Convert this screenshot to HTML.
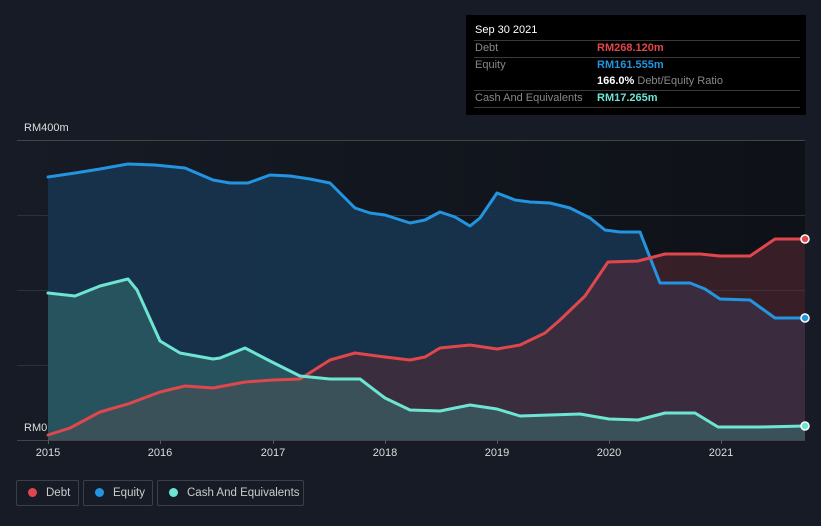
<!DOCTYPE html>
<html><head><style>
body{margin:0;width:821px;height:526px;background:#161b26;font-family:"Liberation Sans",sans-serif;overflow:hidden;position:relative}
.tt{position:absolute;left:466px;top:15px;width:340px;height:100px;background:#000}
.t{position:absolute;font-size:11px;color:#888;white-space:nowrap}
.ln{position:absolute;left:8px;width:326px;height:1px;background:#3a3a3a}
.lg{position:absolute;top:480px;height:26px;border:1px solid #3a3f4a;border-radius:2px;box-sizing:border-box;font-size:11.5px;color:#ccc;line-height:24px;white-space:nowrap;overflow:hidden}
.lg i{display:inline-block;width:9px;height:9px;border-radius:50%;margin:0 9px 0 11px;vertical-align:-1px}
.ax{position:absolute;top:447px;font-size:11px;color:#ddd;width:40px;text-align:center}
</style></head><body>
<svg width="821" height="526" style="position:absolute;left:0;top:0">
<defs><linearGradient id="bg" x1="0" x2="1"><stop offset="0" stop-color="#161b25"/><stop offset="1" stop-color="#0e1117"/></linearGradient></defs>
<rect x="17" y="140" width="788" height="300" fill="url(#bg)"/>
<g stroke="#2c313a" stroke-width="1"><line x1="17" y1="140.5" x2="805" y2="140.5" stroke="#444"/><line x1="17" y1="215.5" x2="805" y2="215.5"/><line x1="17" y1="290.5" x2="805" y2="290.5"/><line x1="17" y1="365.5" x2="805" y2="365.5"/></g>
<polygon fill="#17344f" fill-opacity="0.9" points="48,440 48,177 75,173 100,169 128,164 155,165 185,168 213,180 230,183 248,183 270,175 290,176 310,179 330,183 355,208 370,213 385,215 410,223 425,220 440,212 455,217 470,226 480,218 497,193 515,200 530,202 550,203 570,208 590,218 605,230 620,232 640,232 660,283 690,283 705,289 720,299 750,300 775,318 805,318 805,440"/>
<polygon fill="#5a2a35" fill-opacity="0.55" points="48,440 48,435 70,428 100,412 128,404 160,392 185,386 213,388 245,382 273,380 300,379 330,360 355,353 385,357 410,360 425,357 440,348 470,345 497,349 520,345 545,333 560,320 585,296 608,262 638,261 665,254 700,254 720,256 750,256 775,239 805,239 805,440"/>
<polygon fill="#3b7f7a" fill-opacity="0.45" points="48,440 48,293 75,296 100,286 128,279 137,290 160,341 180,353 213,359 220,358 245,348 270,361 300,376 330,379 360,379 385,398 410,410 440,411 470,405 497,409 520,416 550,415 580,414 609,419 638,420 665,413 695,413 718,427 760,427 805,426 805,440"/>
<g fill="none" stroke-width="3" stroke-linejoin="round" stroke-linecap="round">
<polyline stroke="#2394e0" points="48,177 75,173 100,169 128,164 155,165 185,168 213,180 230,183 248,183 270,175 290,176 310,179 330,183 355,208 370,213 385,215 410,223 425,220 440,212 455,217 470,226 480,218 497,193 515,200 530,202 550,203 570,208 590,218 605,230 620,232 640,232 660,283 690,283 705,289 720,299 750,300 775,318 805,318"/>
<polyline stroke="#e0474c" points="48,435 70,428 100,412 128,404 160,392 185,386 213,388 245,382 273,380 300,379 330,360 355,353 385,357 410,360 425,357 440,348 470,345 497,349 520,345 545,333 560,320 585,296 608,262 638,261 665,254 700,254 720,256 750,256 775,239 805,239"/>
<polyline stroke="#6ee5d2" points="48,293 75,296 100,286 128,279 137,290 160,341 180,353 213,359 220,358 245,348 270,361 300,376 330,379 360,379 385,398 410,410 440,411 470,405 497,409 520,416 550,415 580,414 609,419 638,420 665,413 695,413 718,427 760,427 805,426"/>
</g>
<circle cx="805" cy="239" r="4" fill="#e0474c" stroke="#fff" stroke-width="1.5"/>
<circle cx="805" cy="318" r="4" fill="#2394e0" stroke="#fff" stroke-width="1.5"/>
<circle cx="805" cy="426" r="4" fill="#6ee5d2" stroke="#fff" stroke-width="1.5"/>
<line x1="17" y1="440.5" x2="805" y2="440.5" stroke="#444"/>
<g stroke="#555"><line x1="48.5" y1="440" x2="48.5" y2="444"/><line x1="160.5" y1="440" x2="160.5" y2="444"/><line x1="273.5" y1="440" x2="273.5" y2="444"/><line x1="385.5" y1="440" x2="385.5" y2="444"/><line x1="497.5" y1="440" x2="497.5" y2="444"/><line x1="609.5" y1="440" x2="609.5" y2="444"/><line x1="721.5" y1="440" x2="721.5" y2="444"/></g>
</svg>
<div class="t" style="left:24px;top:122px;color:#ddd">RM400m</div>
<div class="t" style="left:24px;top:422px;color:#ddd">RM0</div>
<div class="ax" style="left:28px">2015</div><div class="ax" style="left:140px">2016</div><div class="ax" style="left:253px">2017</div><div class="ax" style="left:365px">2018</div><div class="ax" style="left:477px">2019</div><div class="ax" style="left:589px">2020</div><div class="ax" style="left:701px">2021</div>
<div class="tt">
<div class="t" style="left:9px;top:9px;color:#fff">Sep 30 2021</div>
<div class="ln" style="top:25px"></div>
<div class="t" style="left:9px;top:27px">Debt</div><div class="t" style="left:131px;top:27px;color:#e0474c;font-weight:bold">RM268.120m</div>
<div class="ln" style="top:42px"></div>
<div class="t" style="left:9px;top:44px">Equity</div><div class="t" style="left:131px;top:44px;color:#2394e0;font-weight:bold">RM161.555m</div>
<div class="t" style="left:131px;top:60px"><b style="color:#fff">166.0%</b> Debt/Equity Ratio</div>
<div class="ln" style="top:75px"></div>
<div class="t" style="left:9px;top:77px">Cash And Equivalents</div><div class="t" style="left:131px;top:77px;color:#6ee5d2;font-weight:bold">RM17.265m</div>
<div class="ln" style="top:92px"></div>
</div>
<div class="lg" style="left:16px;width:63px"><i style="background:#e0474c"></i>Debt</div>
<div class="lg" style="left:83px;width:70px"><i style="background:#2394e0"></i>Equity</div>
<div class="lg" style="left:157px;width:147px"><i style="background:#6ee5d2"></i>Cash And Equivalents</div>
</body></html>
